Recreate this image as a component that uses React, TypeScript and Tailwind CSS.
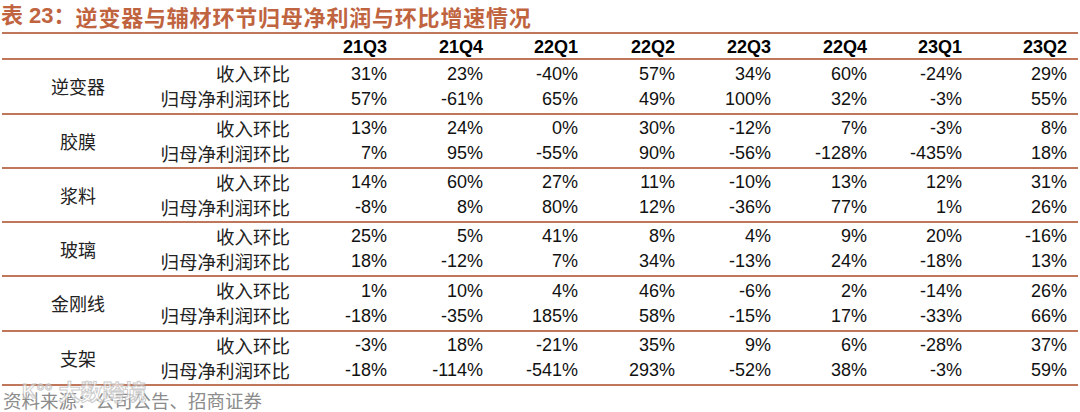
import React from 'react'

const COLS = ['21Q3', '21Q4', '22Q1', '22Q2', '22Q3', '22Q4', '23Q1', '23Q2']

const GROUPS: { name: string; rev: string[]; profit: string[]; h: string }[] = [
  { name: '逆变器', rev: ['31%', '23%', '-40%', '57%', '34%', '60%', '-24%', '29%'], profit: ['57%', '-61%', '65%', '49%', '100%', '32%', '-3%', '55%'], h: 'h-[53px]' },
  { name: '胶膜', rev: ['13%', '24%', '0%', '30%', '-12%', '7%', '-3%', '8%'], profit: ['7%', '95%', '-55%', '90%', '-56%', '-128%', '-435%', '18%'], h: 'h-[52px]' },
  { name: '浆料', rev: ['14%', '60%', '27%', '11%', '-10%', '13%', '12%', '31%'], profit: ['-8%', '8%', '80%', '12%', '-36%', '77%', '1%', '26%'], h: 'h-[52px]' },
  { name: '玻璃', rev: ['25%', '5%', '41%', '8%', '4%', '9%', '20%', '-16%'], profit: ['18%', '-12%', '7%', '34%', '-13%', '24%', '-18%', '13%'], h: 'h-[52px]' },
  { name: '金刚线', rev: ['1%', '10%', '4%', '46%', '-6%', '2%', '-14%', '26%'], profit: ['-18%', '-35%', '185%', '58%', '-15%', '17%', '-33%', '66%'], h: 'h-[53px]' },
  { name: '支架', rev: ['-3%', '18%', '-21%', '35%', '9%', '6%', '-28%', '37%'], profit: ['-18%', '-114%', '-541%', '293%', '-52%', '38%', '-3%', '59%'], h: 'h-[52px]' },
]

const GRID = 'grid grid-cols-[156px_134px_97px_96px_95px_97px_96px_96px_95px_105px]'
const NUM = "font-['Liberation_Sans',Arial,sans-serif] text-[18px] text-right text-[#111]"
const CJK = "font-['Noto_Sans_CJK_SC',sans-serif]"

function Rule() {
  return <div className="ml-[2px] mr-[2px] h-[2px] bg-[#c0765a]" />
}

export default function App() {
  return (
    <div className="relative h-[412px] w-[1080px] overflow-hidden bg-white">
      {/* Title */}
      <div className="flex h-[32px] items-center pl-[1px] text-[22px] font-bold leading-none text-[#c0643f]">
        <span className="font-['Liberation_Sans','Noto_Sans_CJK_SC',sans-serif]">表 23：</span>
        <span className={`${CJK} tracking-[0.8px]`}>逆变器与辅材环节归母净利润与环比增速情况</span>
      </div>
      <Rule />

      {/* Header */}
      <div className={`${GRID} h-[24px] items-center`}>
        <div />
        <div />
        {COLS.map((c) => (
          <div key={c} className={`${NUM} font-bold text-black`}>
            {c}
          </div>
        ))}
      </div>
      <Rule />

      {GROUPS.map((g) => (
        <div key={g.name}>
          <div className={`${GRID} ${g.h} grid-rows-[25px_25px] content-center`}>
            <div className={`${CJK} row-span-2 flex items-center justify-center text-[18px] text-[#222]`}>
              {g.name}
            </div>
            <div className={`${CJK} flex items-center justify-end text-[18.5px] text-[#222]`}>收入环比</div>
            {g.rev.map((v, i) => (
              <div key={i} className={`${NUM} flex items-center justify-end`}>
                {v}
              </div>
            ))}
            <div className={`${CJK} flex items-center justify-end text-[18.5px] text-[#222]`}>归母净利润环比</div>
            {g.profit.map((v, i) => (
              <div key={i} className={`${NUM} flex items-center justify-end`}>
                {v}
              </div>
            ))}
          </div>
          <Rule />
        </div>
      ))}

      {/* Source */}
      <div className={`${CJK} pl-[3px] pt-[3px] text-[18.5px] leading-[22px] text-[#8c8c8c]`}>
        资料来源：公司公告、招商证券
      </div>

      {/* Watermark */}
      <div className="pointer-events-none absolute left-[22px] top-[374px] flex items-center gap-[6px] opacity-70">
        <span className="font-['Liberation_Sans',sans-serif] text-[20px] font-bold text-white [-webkit-text-stroke:1px_#b8b8b8]">
          K°°
        </span>
        <span className={`${CJK} text-[22px] font-bold text-white [-webkit-text-stroke:1px_#b8b8b8]`}>大数跨境</span>
      </div>
    </div>
  )
}
